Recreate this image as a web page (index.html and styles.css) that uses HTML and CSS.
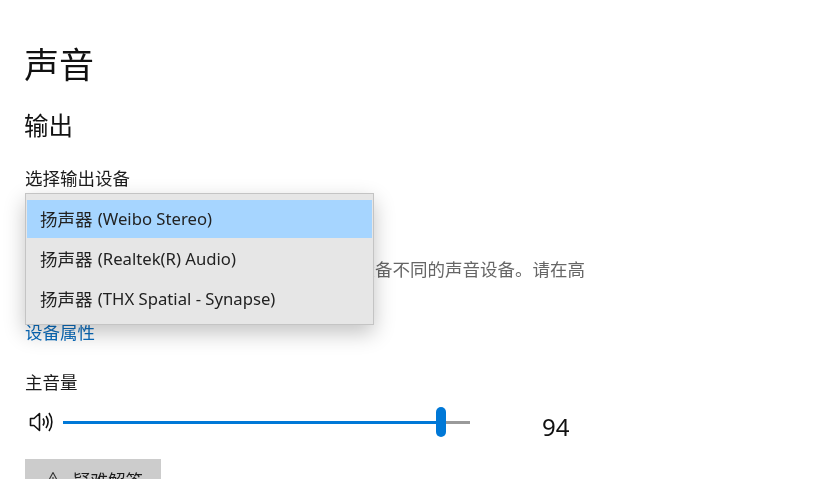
FILE: index.html
```html
<!DOCTYPE html>
<html lang="zh-CN">
<head>
<meta charset="utf-8">
<title>声音</title>
<link rel="stylesheet" href="styles.css">
</head>
<body>
<main class="page">
  <h1 class="title">声音</h1>
  <h2 class="section">输出</h2>
  <div class="label">选择输出设备</div>
  <div class="select-slot"></div>
  <p class="hint">某些应用可能设置为使用与你在此处选择的设备不同的声音设备。请在高</p>
  <a class="link">设备属性</a>
  <div class="label volume-label">主音量</div>
  <div class="volume">
    <svg class="speaker" width="26" height="24" viewBox="0 0 26 24" fill="none" stroke="#111" stroke-width="1.6">
      <path d="M2.500 8.500h3.500l5.500-5v17l-5.500-5h-3.500z" stroke-linejoin="round"/>
      <path d="M15 8.500c1.400 2.200 1.400 4.800 0 7"/>
      <path d="M18 6c2.500 3.600 2.500 8.400 0 12"/>
      <path d="M21 3c3.800 5.300 3.800 12.700 0 18"/>
    </svg>
    <div class="slider">
      <div class="fill"></div>
      <div class="thumb"></div>
      <div class="rest"></div>
    </div>
    <div class="value">94</div>
  </div>
  <button class="trouble"><svg class="warn" width="16" height="16" viewBox="0 0 16 16" fill="none" stroke="#333" stroke-width="1.100"><path d="M8 1.500l7 13h-14z" stroke-linejoin="round"/><path d="M8 6v5M8 12v1.200"/></svg>疑难解答</button>
</main>
<div class="menu">
  <div class="item selected">扬声器 <span class="latin">(Weibo Stereo)</span></div>
  <div class="item">扬声器 <span class="latin">(Realtek(R) Audio)</span></div>
  <div class="item">扬声器 <span class="latin">(THX Spatial - Synapse)</span></div>
</div>
</body>
</html>
```
FILE: styles.css
```css
html, body {
  margin: 0;
  height: 479px;
  overflow: hidden;
  background: #fff;
}
body {
  position: relative;
  width: 828px;
  font-family: "Noto Sans", "Noto Sans CJK SC", sans-serif;
  color: #1c1c1c;
}
.page {
  padding: 42px 0 0 25px;
  display: flex;
  flex-direction: column;
  align-items: flex-start;
  filter: blur(0.35px);
}
.title {
  margin: 0 0 0 -1px;
  font-size: 35px;
  line-height: 46px;
  font-weight: 400;
  color: #111;
}
.section {
  margin: 22px 0 0 -1px;
  font-size: 24.500px;
  line-height: 32px;
  font-weight: 400;
  color: #111;
}
.label {
  margin-top: 24px;
  font-size: 17.500px;
  line-height: 24px;
}
.select-slot {
  height: 67px;
}
.hint {
  margin: 0;
  font-size: 17.500px;
  line-height: 24px;
  color: #666;
  white-space: nowrap;
}
.link {
  margin-top: 39px;
  font-size: 17.500px;
  line-height: 24px;
  color: #0a6cbd;
}
.volume-label {
  margin-top: 26px;
}
.volume {
  display: flex;
  align-items: center;
  margin-top: 12px;
  height: 32px;
}
.speaker {
  margin-left: 3px;
  flex: none;
}
.slider {
  display: flex;
  align-items: center;
  margin-left: 9px;
  width: 407px;
}
.fill {
  width: 373px;
  height: 3px;
  background: #0078d7;
}
.thumb {
  width: 10px;
  height: 30px;
  border-radius: 5px;
  background: #0078d7;
}
.rest {
  flex: 1;
  height: 3px;
  background: #9a9a9a;
}
.value {
  margin: 10px 0 0 72px;
  font-size: 24px;
  line-height: 32px;
  color: #111;
}
.trouble {
  margin-top: 21px;
  width: 136px;
  height: 40px;
  border: 0;
  padding: 0 0 0 20px;
  background: #ccc;
  display: flex;
  align-items: center;
  gap: 12px;
  font: inherit;
  font-size: 17.500px;
  color: #1c1c1c;
}
.warn {
  flex: none;
}
.menu {
  position: absolute;
  left: 25px;
  top: 193px;
  width: 347px;
  padding: 6px 0;
  background: #e6e6e6;
  border: 1px solid #c4c4c4;
  box-shadow: 0 8px 20px rgba(0, 0, 0, 0.24);
  filter: blur(0.35px);
}
.item {
  height: 38px;
  margin: 0 1px 2px;
  padding: 0 0 1px 13px;
  box-sizing: border-box;
  display: flex;
  align-items: center;
  gap: 0.3em;
  font-size: 17.500px;
  color: #222;
}
.item:last-child {
  margin-bottom: 0;
}
.latin {
  font-size: 16.700px;
}
.selected {
  background: #a6d5ff;
}
```
